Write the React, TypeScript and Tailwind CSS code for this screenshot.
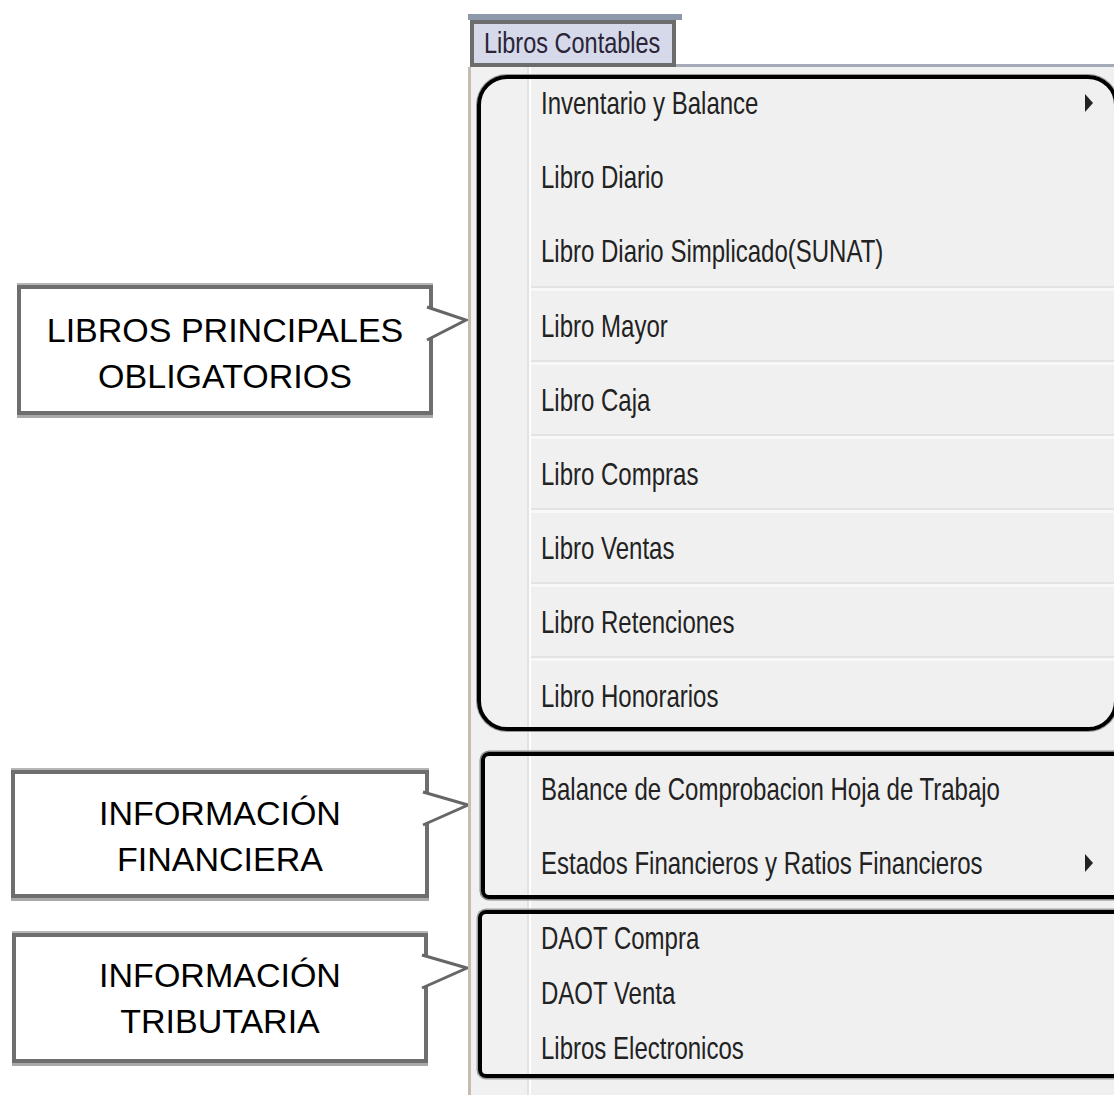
import React from "react";

type Row =
  | { kind: "item"; label: string; h: string; arrow?: boolean }
  | { kind: "sep" }
  | { kind: "space"; h: string };

const rows: Row[] = [
  { kind: "item", label: "Inventario y Balance", h: "h-[72px]", arrow: true },
  { kind: "item", label: "Libro Diario", h: "h-[76px]" },
  { kind: "item", label: "Libro Diario Simplicado(SUNAT)", h: "h-[71px]" },
  { kind: "sep" },
  { kind: "item", label: "Libro Mayor", h: "h-[69px]" },
  { kind: "sep" },
  { kind: "item", label: "Libro Caja", h: "h-[69px]" },
  { kind: "sep" },
  { kind: "item", label: "Libro Compras", h: "h-[69px]" },
  { kind: "sep" },
  { kind: "item", label: "Libro Ventas", h: "h-[69px]" },
  { kind: "sep" },
  { kind: "item", label: "Libro Retenciones", h: "h-[69px]" },
  { kind: "sep" },
  { kind: "item", label: "Libro Honorarios", h: "h-[69px]" },
  { kind: "space", h: "h-[22px]" },
  { kind: "item", label: "Balance de Comprobacion Hoja de Trabajo", h: "h-[74px]" },
  { kind: "item", label: "Estados Financieros y Ratios Financieros", h: "h-[74px]", arrow: true },
  { kind: "space", h: "h-[10px]" },
  { kind: "item", label: "DAOT Compra", h: "h-[55px]" },
  { kind: "item", label: "DAOT Venta", h: "h-[55px]" },
  { kind: "item", label: "Libros Electronicos", h: "h-[55px]" },
];

function Arrow() {
  return (
    <svg width="9" height="20" viewBox="0 0 9 20" className="shrink-0">
      <polygon points="0,1 8,10 0,19" fill="#222" />
    </svg>
  );
}

function Callout({
  cls,
  tip,
  lines,
}: {
  cls: string;
  tip: number;
  lines: string[];
}) {
  return (
    <div
      className={
        "relative bg-white border-[4px] border-[#6e6e6e] shadow-[0_-2px_0_#b6b6b6,0_3px_0_#a9a9a9] flex flex-col items-center justify-center text-[34px] leading-[46px] text-black " +
        cls
      }
    >
      {lines.map((l) => (
        <div key={l}>{l}</div>
      ))}
      <svg
        width="50"
        height="38"
        viewBox="0 0 50 38"
        className="absolute left-full top-[16px] -ml-[4px]"
      >
        <polygon points={`0,2 ${tip},15 0,35`} fill="#fff" />
        <polyline
          points={`2,2 ${tip},15 2,35`}
          fill="none"
          stroke="#666"
          strokeWidth="3"
          strokeLinejoin="miter"
        />
      </svg>
    </div>
  );
}

export default function App() {
  return (
    <div className="w-[1114px] h-[1095px] bg-white flex overflow-hidden font-['Liberation_Sans',Arial,sans-serif]">
      {/* Left annotation column */}
      <div className="w-[468px] shrink-0 flex flex-col">
        <Callout
          cls="mt-[285px] ml-[17px] w-[416px] h-[130px] pt-[6px]"
          tip={41}
          lines={["LIBROS PRINCIPALES", "OBLIGATORIOS"]}
        />
        <Callout
          cls="mt-[355px] ml-[11px] w-[418px] h-[128px] pt-[4px]"
          tip={47}
          lines={["INFORMACIÓN", "FINANCIERA"]}
        />
        <Callout
          cls="mt-[35px] ml-[12px] w-[416px] h-[130px]"
          tip={47}
          lines={["INFORMACIÓN", "TRIBUTARIA"]}
        />
      </div>

      {/* Menu */}
      <div className="flex-1 flex flex-col">
        <div className="pt-[14px]">
          <div className="w-[214px] h-[6px] bg-[#8d98ab]" />
          <div className="flex items-end">
            <div className="ml-[2px] w-[206px] h-[47px] border-[4px] border-[#6c6c6c] bg-[#d5d9ea] flex items-center pl-[10px]">
              <span className="inline-block scale-y-[1.25] text-[23.5px] leading-none text-[#2a2436]">
                Libros Contables
              </span>
            </div>
            <div className="flex-1 h-[3px] bg-[#a6abb8]" />
          </div>
        </div>

        <div className="relative flex-1 flex bg-[#f0f0f0]">
          <div className="w-[3px] bg-[#c6bcb2]" />
          <div className="w-[56px] bg-[#f1f1f1]" />
          <div className="w-[2px] bg-[#e2e2e2]" />
          <div className="w-[2px] bg-[#fdfdfd]" />
          <div className="flex-1 flex flex-col">
            {rows.map((r, i) => {
              if (r.kind === "sep")
                return (
                  <div key={i} className="flex flex-col">
                    <div className="h-[2px] bg-[#e3e3e3]" />
                    <div className="h-[3px] bg-[#f8f8f8]" />
                  </div>
                );
              if (r.kind === "space") return <div key={i} className={r.h} />;
              return (
                <div
                  key={i}
                  className={"flex items-center justify-between pl-[10px] pr-[20px] " + r.h}
                >
                  <span className="inline-block scale-y-[1.33] text-[24px] leading-none text-[#222]">
                    {r.label}
                  </span>
                  {r.arrow && <Arrow />}
                </div>
              );
            })}
          </div>

          {/* Annotation frames drawn over the menu */}
          <div className="absolute left-[9px] top-[8px] w-[641px] h-[656px] rounded-[30px] border-[4px] border-black shadow-[0_0_0_1px_#9a9a9a]" />
          <div className="absolute left-[13px] top-[685px] w-[650px] h-[147px] rounded-[8px] border-[4px] border-black shadow-[0_0_0_1.5px_#8a8a8a]" />
          <div className="absolute left-[10px] top-[843px] w-[650px] h-[168px] rounded-[8px] border-[4px] border-black shadow-[0_0_0_1.5px_#a0a0a0]" />
        </div>
      </div>
    </div>
  );
}
